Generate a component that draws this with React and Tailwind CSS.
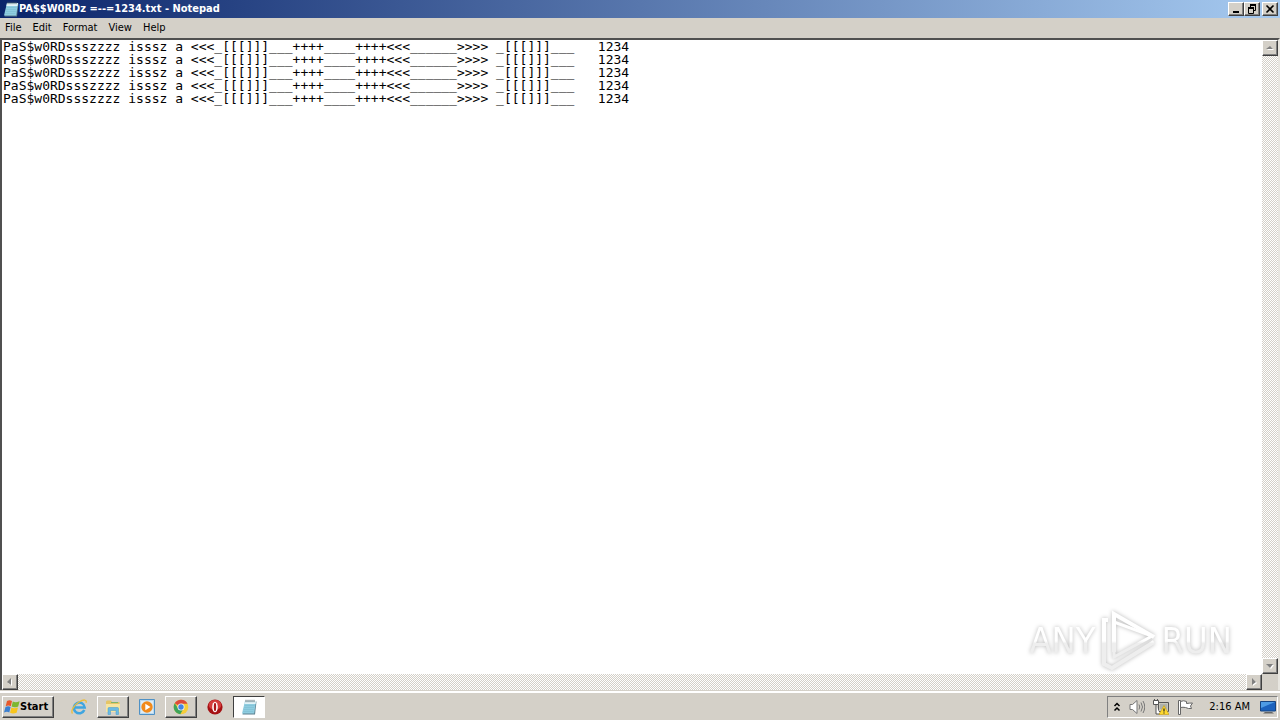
const LINE =
  'PaS$w0RDssszzzz isssz a <<<_[[[]]]___++++____++++<<<______>>>> _[[[]]]___   1234';
const CONTENT = Array(5).fill(LINE).join('\n');

const RAISED =
  'border border-t-white border-l-white border-b-[#404040] border-r-[#404040] bg-[#d4d0c8] shadow-[inset_-1px_-1px_0_#808080]';
const TRACK =
  'bg-[repeating-conic-gradient(#d4d0c8_0_25%,#ffffff_0_50%)] bg-[length:2px_2px]';

function NotepadIcon({ className }) {
  return (
    <svg viewBox="0 0 16 16" className={className} aria-hidden="true">
      <path d="M4.500 2.500H15.500L14 15.500H1.500z" fill="#5d7f8e" />
      <path d="M4 2h11l-1.800 12.500H1z" fill="#8fcde0" />
      <path d="M4 2h11l-.5 3H3.400z" fill="#e4f4f8" />
      <path d="M3.600 6.500h10M3.200 8.500h10M2.700 10.500h10M2.200 12.500h10" stroke="#79b9ce" strokeWidth=".5" />
      <path d="M5 .8v2.400M7 .8v2.400M9 .8v2.400M11 .8v2.400M13 .8v2.400" stroke="#4b626b" strokeWidth=".9" />
    </svg>
  );
}

function WindowsLogo() {
  return (
    <svg viewBox="0 0 16 16" className="size-4" aria-hidden="true">
      <path d="M3 2C5 .7 6.500 1 8 2L6.800 7.200C5.300 6.300 3.600 6.200 1.700 7.200z" fill="#e8582a" />
      <path d="M8.800 2.500c1.900 1 3.900 1 6.800-.3L14.200 7.400c-2.400 1.100-4.500 1.200-6.600.2z" fill="#7db72f" />
      <path d="M1.500 8c2-.9 3.700-.8 5.100.1L5.300 13.400C3.800 12.500 2.100 12.500 0 13.400z" fill="#3b7fd0" />
      <path d="M7.400 8.500c2 1 4.200.9 6.600-.1l-1.400 5.300c-2.300 1-4.500 1.100-6.500.1z" fill="#f8c51c" />
    </svg>
  );
}

function ExplorerBrowserIcon() {
  return (
    <svg viewBox="0 0 16 16" className="size-4" aria-hidden="true">
      <path d="M13.300 11A5.400 5.400 0 1 1 13.700 8.500H4" fill="none" stroke="#3fa5e0" strokeWidth="2.500" />
      <path d="M1.500 14.500C-.5 12 3 6 8 3s8-2.500 7 .8" fill="none" stroke="#ecbd3b" strokeWidth="1.300" />
    </svg>
  );
}

function FolderIcon() {
  return (
    <svg viewBox="0 0 16 16" className="size-4" aria-hidden="true">
      <path d="M1 2.500 2 1.500h4l1 1.500h7.500v10H1z" fill="#e5c566" />
      <path d="M1 5h14v8H1z" fill="#f7e5a0" />
      <path d="M6 3.500h7" stroke="#7fb46b" />
      <path d="M3 15.500V9.500q0-1 1-1h8.500q1 0 1 1v6H11v-4H5.500v4z" fill="#6bbbe3" stroke="#4698c6" strokeWidth=".5" />
    </svg>
  );
}

function MediaPlayerIcon() {
  return (
    <svg viewBox="0 0 16 16" className="size-4" aria-hidden="true">
      <path d="M.5.5h15v15H.5z" fill="#b9d9ef" stroke="#4f91c5" />
      <path d="M2 2h12v12H2z" fill="#dcecf6" />
      <circle cx="8" cy="8" r="5.700" fill="#f18a1b" />
      <path d="M6.300 4.800v6.400L11.500 8z" fill="#fff" />
    </svg>
  );
}

function ChromeIcon() {
  return (
    <svg viewBox="0 0 16 16" className="size-4" aria-hidden="true">
      <circle cx="8" cy="8" r="7.300" fill="#f6cd3a" />
      <path d="M8 8 1.700 4.300A7.300 7.300 0 0 1 14.500 4.800H8z" fill="#dc4a3c" />
      <path d="M1.700 4.300A7.300 7.300 0 0 0 7.300 15.300L10.500 9.500 5.200 9.600z" fill="#3ea45a" />
      <circle cx="8" cy="8" r="3.500" fill="#f4f4f4" />
      <circle cx="8" cy="8" r="2.700" fill="#4384e4" />
    </svg>
  );
}

function OperaIcon() {
  return (
    <svg viewBox="0 0 16 16" className="size-4" aria-hidden="true">
      <circle cx="8" cy="8" r="7.600" fill="#a51013" />
      <ellipse cx="8" cy="6" rx="6.300" ry="5" fill="#d43c3c" />
      <ellipse cx="8" cy="8" rx="2.800" ry="5.200" fill="#fff" />
      <ellipse cx="8" cy="8" rx="1.200" ry="4.200" fill="#ad1518" />
    </svg>
  );
}

function Arrow({ d }) {
  return (
    <svg viewBox="0 0 8 8" className="size-2" aria-hidden="true">
      <path d={d} transform="translate(1 1)" fill="#fff" />
      <path d={d} fill="#808080" />
    </svg>
  );
}

function ScrollButton({ label, d }) {
  return (
    <button aria-label={label} className={`flex size-4 shrink-0 items-center justify-center ${RAISED}`}>
      <Arrow d={d} />
    </button>
  );
}

function CaptionButton({ label, children }) {
  return (
    <button aria-label={label} className={`flex h-[14px] w-4 items-center justify-center ${RAISED}`}>
      <svg viewBox="0 0 12 10" className="h-[10px] w-3" fill="none" stroke="#000" aria-hidden="true">
        {children}
      </svg>
    </button>
  );
}

function TaskButton({ label, state, children }) {
  const look =
    state === 'active'
      ? 'border border-t-[#404040] border-l-[#404040] border-b-white border-r-white bg-white'
      : state === 'open'
        ? RAISED
        : '';
  return (
    <button aria-label={label} className={`flex h-[22px] w-8 items-center justify-center ${look}`}>
      {children}
    </button>
  );
}

function Watermark() {
  const word = 'bg-linear-to-b from-white from-50% to-[#eeeeee] to-55% bg-clip-text text-transparent';
  return (
    <div className="pointer-events-none absolute right-[46px] bottom-[18px] flex items-center gap-1 font-['DejaVu_Sans_Condensed','DejaVu_Sans',sans-serif] text-[36px] leading-[48px] drop-shadow-[0_0_2px_#b8b8b8]">
      <span className={word}>ANY</span>
      <svg viewBox="0 0 58 62" className="h-[62px] w-[58px]" fill="none" strokeWidth="4" aria-hidden="true">
        <defs>
          <linearGradient id="mark" x1="0" y1="0" x2="0" y2="62" gradientUnits="userSpaceOnUse">
            <stop offset=".5" stopColor="#ffffff" />
            <stop offset=".54" stopColor="#eeeeee" />
          </linearGradient>
        </defs>
        <g stroke="url(#mark)">
          <path d="M14 42V4l40 23" />
          <path d="M14 12v35l38-21L14 12" strokeWidth="3" />
          <path d="M8 10H4v44l8 4 42-26" />
        </g>
      </svg>
      <span className={word}>RUN</span>
    </div>
  );
}

export default function App() {
  return (
    <div className="flex h-screen flex-col overflow-hidden bg-[#d4d0c8] font-['DejaVu_Sans_Condensed','DejaVu_Sans',sans-serif] text-[11px] leading-4 text-black">
      <header className="flex h-[18px] shrink-0 items-center bg-linear-to-r/srgb from-[#0a246a] to-[#a6caf0] pr-[2px] pl-[3px]">
        <NotepadIcon className="size-4" />
        <h1 className="flex-1 font-bold text-white">PA$$W0RDz =--=1234.txt - Notepad</h1>
        <CaptionButton label="Minimize">
          <path d="M3 8h6" strokeWidth="2" />
        </CaptionButton>
        <CaptionButton label="Restore">
          <path d="M4 1h6M2 4h6" strokeWidth="2" />
          <path d="M4.500 1v2M9.500 1v5.500H8M2.500 4v5.500h5V4" />
        </CaptionButton>
        <div className="ml-[2px] flex">
          <CaptionButton label="Close">
            <path d="m2.500 1.500 7 7m0-7-7 7" strokeWidth="1.600" />
          </CaptionButton>
        </div>
      </header>

      <nav className="flex h-5 shrink-0 items-center gap-[11px] pl-[5px]">
        <button>File</button>
        <button>Edit</button>
        <button>Format</button>
        <button>View</button>
        <button>Help</button>
      </nav>

      <main className="relative flex min-h-0 flex-1 flex-col border-2 border-b-0 border-t-[#505050] border-r-[#e8e6e0] border-l-[#505050] bg-white">
        <div className="flex min-h-0 flex-1">
          <textarea
            aria-label="Document text"
            spellCheck={false}
            wrap="off"
            defaultValue={CONTENT}
            className="min-w-0 flex-1 resize-none overflow-hidden bg-white pl-px font-['DejaVu_Sans_Mono',monospace] text-[13px] leading-[13px] outline-none"
          />
          <div className={`flex w-4 flex-col justify-between ${TRACK}`}>
            <ScrollButton label="Scroll up" d="M4 2 7 5H0z" />
            <ScrollButton label="Scroll down" d="M0 2h7L4 6z" />
          </div>
        </div>
        <div className="flex h-4 shrink-0">
          <div className={`flex flex-1 justify-between ${TRACK}`}>
            <ScrollButton label="Scroll left" d="M5 0v7L1 4z" />
            <ScrollButton label="Scroll right" d="M2 0v7l4-3z" />
          </div>
          <div className="w-4 bg-[#d4d0c8]" />
        </div>
        <Watermark />
      </main>

      <footer className="flex h-[30px] shrink-0 items-center border-t border-[#d4d0c8] pt-[2px] pr-[2px] pl-[2px] shadow-[inset_0_2px_0_#ffffff]">
        <button className={`mr-[9px] flex h-[22px] w-[52px] items-center pl-px font-bold ${RAISED}`}>
          <WindowsLogo />
          Start
        </button>
        <div className="flex flex-1 gap-[2px]">
          <TaskButton label="Internet Explorer"><ExplorerBrowserIcon /></TaskButton>
          <TaskButton label="Windows Explorer" state="open"><FolderIcon /></TaskButton>
          <TaskButton label="Media Player"><MediaPlayerIcon /></TaskButton>
          <TaskButton label="Chrome" state="open"><ChromeIcon /></TaskButton>
          <TaskButton label="Opera"><OperaIcon /></TaskButton>
          <TaskButton label="Notepad" state="active"><NotepadIcon className="size-4" /></TaskButton>
        </div>
        <div className="flex h-[22px] items-center gap-2 border border-t-[#808080] border-l-[#808080] border-r-white border-b-white pr-px pl-[5px]">
          <button aria-label="Show hidden icons">
            <svg viewBox="0 0 8 10" className="h-[10px] w-2" fill="none" stroke="#000" strokeWidth="1.500" aria-hidden="true">
              <path d="m1.500 4 2.500-2.500L6.500 4M1.500 8.500 4 6l2.500 2.500" />
            </svg>
          </button>
          <button aria-label="Volume">
            <svg viewBox="0 0 16 16" className="size-4" fill="none" stroke="#777" aria-hidden="true">
              <path d="M1 5.500h2.500L8 1.500v13l-4.500-4H1z" fill="#fff" />
              <path d="M10 5.500q1.500 2.500 0 5M12 3.500q3 4.500 0 9M14 2q3.500 6 0 12" />
            </svg>
          </button>
          <button aria-label="Network">
            <svg viewBox="0 0 16 16" className="size-4" aria-hidden="true">
              <path d="M5.500 3.500h10v9h-10z" fill="#c9c7bc" stroke="#555" />
              <path d="M7 5h7v5H7z" fill="#aeb1ac" />
              <path d="M.5 1.500h5v4h-5zM1.500 0v2M4.500 0v2M3 6v9h4" fill="#fff" stroke="#555" />
              <path d="M11 6.500 16 15.500H6z" fill="#ffd92e" stroke="#c49b13" strokeWidth=".6" />
              <path d="M11 9.500v3M11 13.500v1" stroke="#222" strokeWidth="1.200" />
            </svg>
          </button>
          <button aria-label="Action center">
            <svg viewBox="0 0 16 16" className="size-4" fill="#fff" stroke="#666" aria-hidden="true">
              <path d="M1.500 1.500h2v14h-2z" />
              <path d="M3.500 2.500q3-1.500 6 0v2q3-.5 6-.5l-2 3 1 2.500q-3 .5-6-1-2.500-.5-5 0z" />
            </svg>
          </button>
          <time className="mr-[2px] ml-2">2:16 AM</time>
          <button aria-label="Show desktop">
            <svg viewBox="0 0 16 16" className="size-4" aria-hidden="true">
              <path d="M.5 2.500h15v9.500H.5z" fill="#1c62bd" stroke="#174480" />
              <path d="M1 3h14L1 9z" fill="#4e9be4" />
              <path d="M5 13h7l2 1.500H3z" fill="#666" />
            </svg>
          </button>
        </div>
      </footer>
    </div>
  );
}
